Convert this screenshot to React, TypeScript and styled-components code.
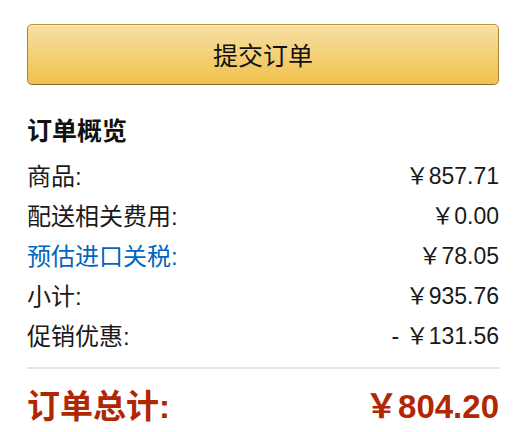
import React from "react";
import styled, { createGlobalStyle } from "styled-components";

const GlobalStyle = createGlobalStyle`
  html, body {
    margin: 0;
    padding: 0;
    background: #fff;
  }
  body {
    font-family: "Liberation Sans", "Noto Sans CJK SC", sans-serif;
    color: #111;
  }
`;

const Page = styled.div`
  padding: 24px 23px 0 27px;
`;

const SubmitButton = styled.button`
  display: flex;
  align-items: center;
  justify-content: center;
  width: 100%;
  height: 61px;
  margin: 0;
  padding: 0 0 2px;
  border: 1px solid;
  border-color: #b8933a #a88734 #8c6f2a;
  border-radius: 5px;
  background: linear-gradient(to bottom, #f7dfa5, #f0c14b);
  box-shadow: inset 0 1px 0 rgba(255, 255, 255, 0.4);
  font-family: inherit;
  font-size: 25px;
  color: #111;
  cursor: pointer;
`;

const Summary = styled.div`
  margin-top: 29px;
`;

const Title = styled.h3`
  margin: 0 0 6px;
  height: 34px;
  line-height: 34px;
  font-size: 25px;
  font-weight: 700;
  color: #111;
`;

const Row = styled.div`
  display: flex;
  justify-content: space-between;
  align-items: center;
  height: 40px;
  font-size: 24px;
  color: ${(p: { $link?: boolean }) => (p.$link ? "#0066c0" : "#1a1a1a")};
`;

const Amount = styled.span`
  font-size: 23px;
  color: #1a1a1a;
`;

const Divider = styled.hr`
  margin: 13px 0 0;
  border: 0;
  height: 2px;
  background: #e3e3e3;
`;

const TotalRow = styled.div`
  display: flex;
  justify-content: space-between;
  align-items: center;
  height: 50px;
  margin-top: 10px;
  font-size: 33px;
  font-weight: 700;
  color: #b12704;
`;

const rows = [
  { label: "商品:", value: "￥857.71" },
  { label: "配送相关费用:", value: "￥0.00" },
  { label: "预估进口关税:", value: "￥78.05", link: true },
  { label: "小计:", value: "￥935.76" },
  { label: "促销优惠:", value: "- ￥131.56" },
];

export default function App() {
  return (
    <>
      <GlobalStyle />
      <Page>
        <SubmitButton>提交订单</SubmitButton>
        <Summary>
          <Title>订单概览</Title>
          {rows.map((r) => (
            <Row key={r.label} $link={r.link}>
              <span>{r.label}</span>
              <Amount>{r.value}</Amount>
            </Row>
          ))}
          <Divider />
          <TotalRow>
            <span>订单总计:</span>
            <span>￥804.20</span>
          </TotalRow>
        </Summary>
      </Page>
    </>
  );
}
